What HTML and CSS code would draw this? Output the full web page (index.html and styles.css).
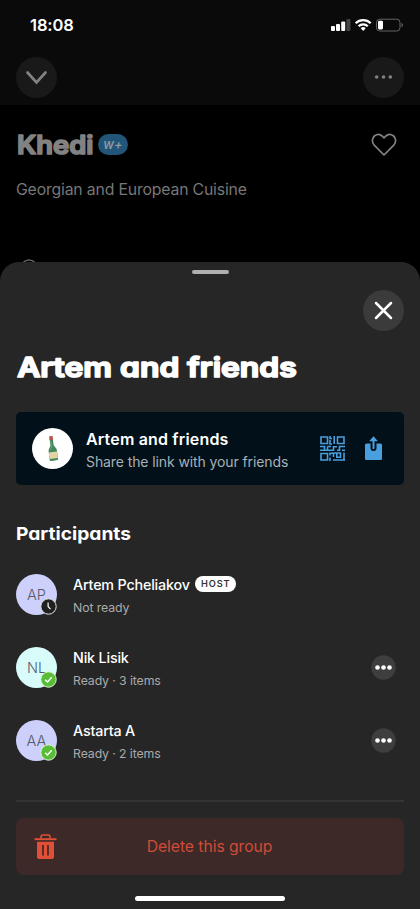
FILE: index.html
```html
<!DOCTYPE html>
<html lang="en">
<head>
<meta charset="utf-8">
<title>Artem and friends</title>
<link rel="stylesheet" href="styles.css">
</head>
<body>
<div class="screen">
  <header class="top">
    <div class="status">
      <span class="time">18:08</span>
      <svg class="signals" width="73" height="14" viewBox="0 0 73 14">
        <g fill="#fff"><rect x="0" y="8" width="4" height="5" rx="1"/><rect x="5" y="6" width="4" height="7" rx="1"/><rect x="10.200" y="3.500" width="4" height="9.500" rx="1"/></g>
        <rect x="15.400" y="1" width="4" height="12" rx="1" fill="#454545"/>
        <g fill="none" stroke="#fff" stroke-width="2.300"><path d="M24.700 5.200a10.600 10.600 0 0 1 15 0"/><path d="M27.600 8.200a6.500 6.500 0 0 1 9.200 0"/></g>
        <path d="M29.700 10.300a3.600 3.600 0 0 1 5 0L32.200 12.900z" fill="#fff"/>
        <rect x="45.500" y="1.200" width="23.500" height="11.800" rx="3.300" fill="none" stroke="#656565"/>
        <rect x="47" y="2.800" width="5" height="8.600" rx="1.300" fill="#fff"/>
        <path d="M70.500 5v4.200q1.600-.6 1.600-2.100T70.500 5z" fill="#656565"/>
      </svg>
    </div>
    <div class="nav">
      <div class="round dim"><svg width="41" height="41" viewBox="0 0 41 41"><path d="M11.500 15.500l9 10 9-10" fill="none" stroke="#828282" stroke-width="2.700" stroke-linecap="round" stroke-linejoin="miter"/></svg></div>
      <div class="round dim"><svg width="41" height="41" viewBox="0 0 41 41" fill="#828282"><circle cx="13.700" cy="20" r="1.800"/><circle cx="20.500" cy="20" r="1.800"/><circle cx="27.300" cy="20" r="1.800"/></svg></div>
    </div>
  </header>
  <section class="venue">
    <div class="venue-row">
      <h2 class="venue-name"><svg width="78" height="32" viewBox="0 0 78 32"><text class="display muted" x="1" y="24.500" font-size="25" textLength="76.500" lengthAdjust="spacingAndGlyphs">Khedi</text></svg></h2>
      <span class="plus">w+</span>
      <svg class="heart" width="26" height="24" viewBox="0 0 26 24"><path d="M13 22L3.200 12.100C.6 9.300.9 5.200 3.400 3 6 1 9.200 1.300 11.300 3.200L13 4.900l1.700-1.700c2.100-1.900 5.300-2.200 7.900-.2 2.500 2.200 2.800 6.300.2 9.100z" fill="none" stroke="#828282" stroke-width="1.700" stroke-linejoin="round"/></svg>
    </div>
    <p class="cuisine">Georgian and European Cuisine</p>
    <svg class="peek" width="18" height="18" viewBox="0 0 18 18"><circle cx="9" cy="9" r="8" fill="none" stroke="#666" stroke-width="1.400"/></svg>
  </section>
  <main class="sheet">
    <div class="handle"></div>
    <div class="round close"><svg width="41" height="41" viewBox="0 0 41 41"><path d="M13 13l15 15M28 13L13 28" stroke="#fff" stroke-width="2.500" stroke-linecap="round"/></svg></div>
    <h1 class="title"><svg width="300" height="36" viewBox="0 0 300 36"><text class="display" x="1.200" y="27.400" font-size="26.800" textLength="279.500" lengthAdjust="spacingAndGlyphs">Artem and friends</text></svg></h1>
    <div class="card">
      <div class="round emoji"><svg width="41" height="41" viewBox="0 0 41 41">
        <g transform="rotate(-7 20.500 20.500)"><path d="M18.800 10h3.200v7c.2 2 2.700 3 2.700 6v9.400q-4.200 1-8.400 0V23c0-3 2.300-4 2.500-6z" fill="#43885a"/><path d="M18.600 8h3.600v4h-3.600z" fill="#b65a52"/><path d="M16.300 24h8.400v6.500h-8.400z" fill="#e3d4a5"/><path d="M19.700 13v6l-1.800 3" fill="none" stroke="#76aa83" stroke-width=".8"/></g></svg></div>
      <div class="card-text"><div class="card-title">Artem and friends</div><div class="card-sub">Share the link with your friends</div></div>
      <svg class="qr" width="25" height="25" viewBox="0 0 25 25" fill="none" stroke="#4a9fdf" stroke-width="1.600"><path d="M1 1h6.500v6.500H1zM17.500 1H24v6.500h-6.500zM1 17.500h6.500V24H1zM10 0v2.500h2M14.200 0v8M10 4v4h2M11 10.500H7.500M0 10.500h4.500v3M0 14.300h13.500v-3.500H17M7.500 10.500v3.800M17 14.300h2.500v-3.800H25M22 14.300h3M10 25v-3.500M10 19.500v-2.300h3.500V21M13 24h12M24 24v-7.500M16.800 17h3.700v4.200h-3.700zM14 17h2"/></svg>
      <svg class="share" width="17" height="25" viewBox="0 0 17 25"><path d="M1.500 7.500h4V12a3 3 0 0 0 6 0V7.500h4A1.500 1.500 0 0 1 17 9v13.500a1.500 1.500 0 0 1-1.500 1.500h-14A1.500 1.500 0 0 1 0 22.500V9a1.500 1.500 0 0 1 1.500-1.500z" fill="#4a9fdf"/><path d="M8.500.3l4.400 5H9.500v7a1 1 0 0 1-2 0v-7H4.100z" fill="#4a9fdf"/></svg>
    </div>
    <h3 class="subhead">Participants</h3>
    <div class="people">
      <div class="person">
        <div class="round avatar lilac">AP<svg class="mark" width="17" height="17" viewBox="0 0 17 17"><circle cx="8.500" cy="8.500" r="7.700" fill="#202020" stroke="#e5e5e5"/><path d="M8.100 4.500v4l2.400 2.600" fill="none" stroke="#fff" stroke-width="1.200"/></svg></div>
        <div class="info"><div class="name">Artem Pcheliakov<span class="host">HOST</span></div><div class="state">Not ready</div></div>
      </div>
      <div class="person">
        <div class="round avatar mint">NL<svg class="mark" width="17" height="17" viewBox="0 0 17 17"><circle cx="8.500" cy="8.500" r="7.700" fill="#59bd38" stroke="#ddf7d5"/><path d="M5.200 8.700l2.300 2.200 4.200-4.600" fill="none" stroke="#fff" stroke-width="1.400"/></svg></div>
        <div class="info"><div class="name">Nik Lisik</div><div class="state">Ready · 3 items</div></div>
        <svg class="more" width="25" height="25" viewBox="0 0 25 25"><circle cx="12.500" cy="12.500" r="12.200" fill="#3e3e3e"/><g fill="#fff"><circle cx="6.500" cy="12.500" r="2.300"/><circle cx="12.500" cy="12.500" r="2.300"/><circle cx="18.500" cy="12.500" r="2.300"/></g></svg>
      </div>
      <div class="person">
        <div class="round avatar lilac">AA<svg class="mark" width="17" height="17" viewBox="0 0 17 17"><circle cx="8.500" cy="8.500" r="7.700" fill="#59bd38" stroke="#ddf7d5"/><path d="M5.200 8.700l2.300 2.200 4.200-4.600" fill="none" stroke="#fff" stroke-width="1.400"/></svg></div>
        <div class="info"><div class="name">Astarta A</div><div class="state">Ready · 2 items</div></div>
        <svg class="more" width="25" height="25" viewBox="0 0 25 25"><circle cx="12.500" cy="12.500" r="12.200" fill="#3e3e3e"/><g fill="#fff"><circle cx="6.500" cy="12.500" r="2.300"/><circle cx="12.500" cy="12.500" r="2.300"/><circle cx="18.500" cy="12.500" r="2.300"/></g></svg>
      </div>
    </div>
    <div class="divider"></div>
    <div class="delete">
      <svg class="trash" width="23" height="25" viewBox="0 0 23 25"><path d="M7 4.500V2.700Q7 1 8.700 1h5.600Q16 1 16 2.700v1.800" fill="none" stroke="#e14f36" stroke-width="1.600"/><path d="M.5 5.200h22" stroke="#e14f36" stroke-width="1.900"/><path d="M3 7.800h17V23q0 2-2 2H5q-2 0-2-2z" fill="#e14f36"/><path d="M9 11v10.500M14 11v10.500" stroke="#3d2927" stroke-width="1.700"/></svg>
      <span class="delete-label">Delete this group</span>
    </div>
    <div class="home"></div>
  </main>
</div>
</body>
</html>
```
FILE: styles.css
```css
* { box-sizing: border-box; }
body { margin: 0; background: #000; font-family: Inter, "Liberation Sans", sans-serif; color: #fff; }
h1, h2, h3, p { margin: 0; }
svg { display: block; flex: none; }
.screen { width: 420px; height: 909px; overflow: hidden; display: flex; flex-direction: column; }
.top { height: 105px; flex: none; background: #0a0a0a; }
.status { display: flex; justify-content: space-between; height: 57px; padding: 18px 16px 0 30px; }
.time { font-size: 16.5px; line-height: 15px; font-weight: 600; letter-spacing: -.1px; }
.nav { display: flex; justify-content: space-between; padding: 0 16px; }
.round { width: 41px; height: 41px; border-radius: 50%; flex: none; }
.dim { background: #191919; }
.venue { height: 157px; flex: none; padding: 27px 16px 0; overflow: hidden; }
.venue-row { display: flex; align-items: center; height: 25px; }
.display { fill: #fff; stroke: #fff; stroke-width: 1.7px; stroke-linejoin: round; font-weight: 600; font-feature-settings: "cv11"; }
.muted { fill: #828282; stroke: #828282; }
.plus { margin-left: 4px; width: 30px; height: 21px; border-radius: 11px; background: #225577; color: #909ca5; font-size: 13px; line-height: 20px; font-style: italic; font-weight: 500; text-align: center; }
.heart { margin-left: auto; margin-right: 7.5px; }
.cuisine { margin-top: 22px; padding-top: 1px; font-size: 15.8px; line-height: 20px; letter-spacing: -.17px; color: #777; white-space: nowrap; }
.peek { margin: 59px 0 0 4px; }
.sheet { height: 647px; flex: none; padding: 8px 16px 0; border-radius: 19px 19px 0 0; background: #262626; }
.handle { width: 37px; height: 4px; margin: 0 auto; border-radius: 2px; background: #b0aeae; }
.close { margin: 16px 0 0 auto; background: #3b3b3b; }
.title { margin-top: 19px; }
.card { display: flex; align-items: center; height: 73px; margin-top: 26px; padding: 0 22px 0 16px; border-radius: 5px; background: #021019; }
.emoji { background: #fff; }
.card-text { margin-left: 13px; flex: 1; white-space: nowrap; padding-top: 3px; }
.card-title { font-size: 16px; line-height: 24px; font-weight: 600; letter-spacing: .17px; }
.card-sub { font-size: 14px; line-height: 22px; letter-spacing: -.1px; color: #a8b0b5; }
.share { margin-left: 20px; }
.subhead { width: 200px; margin-top: 37px; font-size: 18px; line-height: 24px; font-weight: 650; font-feature-settings: "cv11"; transform: scaleX(1.065); transform-origin: left; }
.people { display: grid; gap: 32px; margin-top: 28px; }
.person { display: flex; height: 41px; align-items: center; padding-right: 8px; }
.avatar { position: relative; font-size: 14.5px; line-height: 41px; font-weight: 300; text-align: center; color: #555b6c; }
.lilac { background: #ccd0fa; }
.mint { background: #d8fcfa; }
.mark { position: absolute; right: 0; bottom: 0; }
.info { flex: 1; margin-left: 16px; padding-top: 2px; white-space: nowrap; }
.name { display: flex; align-items: center; height: 20px; font-size: 14.3px; letter-spacing: -.17px; font-weight: 500; }
.state { margin-top: 5px; height: 18px; font-size: 12.3px; line-height: 18px; letter-spacing: -.1px; color: #aaa; }
.host { margin: -1px 0 0 5.5px; width: 41px; height: 16px; border-radius: 8px; background: #fff; color: #333; font-size: 9.2px; line-height: 16px; font-weight: 600; letter-spacing: .9px; text-align: center; }
.divider { height: 2px; margin-top: 39px; background: #333; }
.delete { display: flex; align-items: center; height: 57px; margin-top: 16px; padding: 0 18px; border-radius: 8px; background: #3d2927; }
.delete-label { flex: 1; margin-right: 24px; text-align: center; font-size: 15.7px; line-height: 20px; padding-top: 1px; letter-spacing: -.05px; color: #cf4c38; }
.home { width: 150px; height: 5px; margin: 21px auto 0; border-radius: 3px; background: #fff; }
```
